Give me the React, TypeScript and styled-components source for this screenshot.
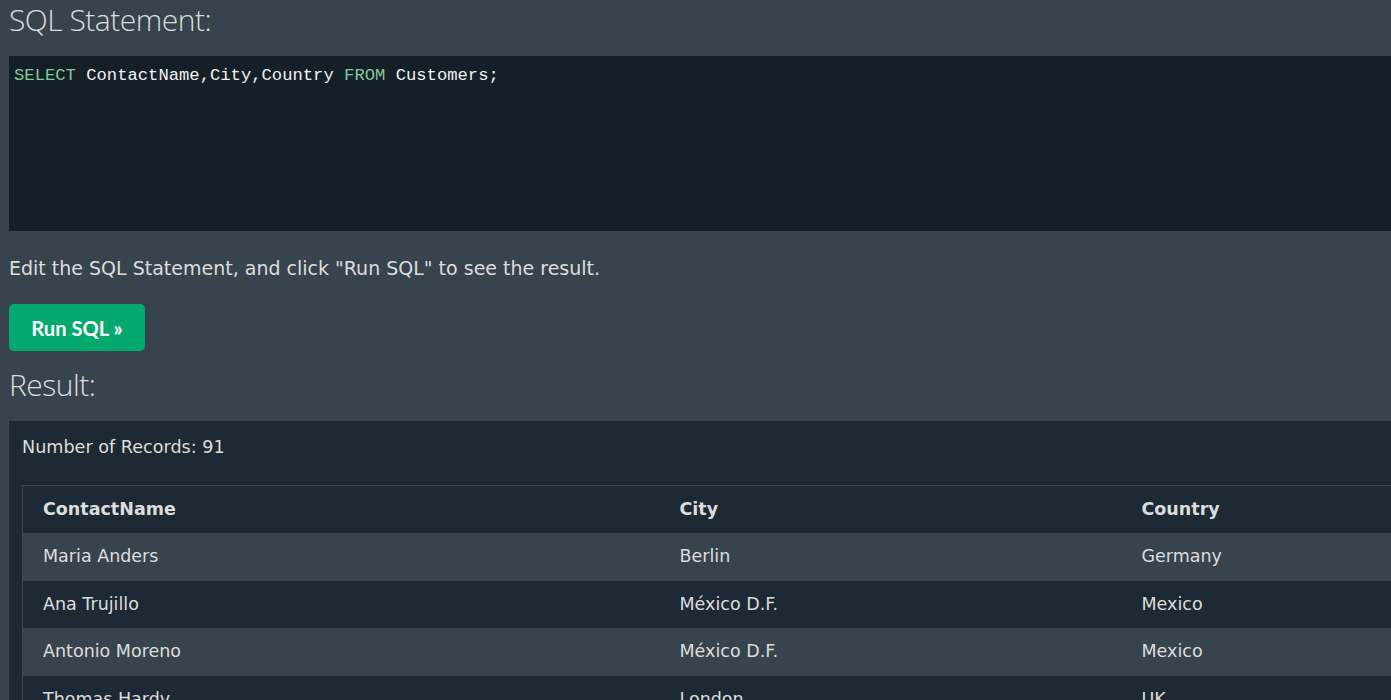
import React from "react";
import styled, { createGlobalStyle } from "styled-components";

const GlobalStyle = createGlobalStyle`
  html, body {
    margin: 0;
    padding: 0;
    overflow: hidden;
    background: #38444d;
  }
  body {
    font-family: "DejaVu Sans", Verdana, sans-serif;
    color: #dddddd;
  }
`;

const Page = styled.div`
  width: 1440px;
  padding-left: 9px;
  box-sizing: border-box;
  background: #38444d;
  min-height: 700px;
`;

const Heading = styled.h3<{ $top: number }>`
  margin: ${(p) => p.$top}px 0 0 0;
  font-family: "Open Sans", "Segoe UI", sans-serif;
  font-weight: 300;
  font-size: 30px;
  letter-spacing: -0.5px;
  line-height: 36px;
  color: #dddddd;
`;

const CodeBox = styled.div`
  margin-top: 18px;
  height: 175px;
  box-sizing: border-box;
  padding: 10px 5px;
  background: #151f28;
  font-family: "Liberation Mono", "DejaVu Sans Mono", monospace;
  font-size: 17.2px;
  line-height: 1.2;
  color: #f2f2f2;
  white-space: pre;
`;

const Keyword = styled.span`
  color: #85c69a;
`;

const Instruction = styled.p`
  margin: 23px 0 0 0;
  font-size: 19px;
  line-height: 28px;
  color: #dddddd;
`;

const RunButton = styled.button`
  margin-top: 22px;
  width: 136px;
  height: 47px;
  display: flex;
  align-items: center;
  justify-content: center;
  border: none;
  border-radius: 5px;
  background: #04aa6d;
  color: #ffffff;
  font-family: Lato, "Open Sans", sans-serif;
  font-weight: 700;
  font-size: 20.2px;
  padding: 0;
  cursor: pointer;
`;

const ResultBox = styled.div`
  margin-top: 18px;
  background: #1d2a35;
  padding: 14px 0 0 13px;
  min-height: 400px;
  box-sizing: border-box;
`;

const RecordCount = styled.div`
  font-size: 17.6px;
  line-height: 25px;
  color: #dddddd;
`;

const Table = styled.table`
  margin-top: 25px;
  border-collapse: collapse;
  border-top: 1px solid #3a4650;
  border-left: 1px solid #3a4650;
  width: 1420px;
  font-size: 17.5px;
  color: #dddddd;
`;

const Row = styled.tr<{ $alt?: boolean }>`
  background: ${(p) => (p.$alt ? "#38444d" : "#1d2a35")};
`;

const HeadCell = styled.th<{ $w?: number }>`
  text-align: left;
  font-weight: 700;
  padding: 12px 20px 12px 20px;
  line-height: 23px;
  width: ${(p) => (p.$w ? `${p.$w}px` : "auto")};
  box-sizing: border-box;
`;

const Cell = styled.td`
  padding: 12px 20px;
  line-height: 23.5px;
`;

const rows = [
  ["Maria Anders", "Berlin", "Germany"],
  ["Ana Trujillo", "México D.F.", "Mexico"],
  ["Antonio Moreno", "México D.F.", "Mexico"],
  ["Thomas Hardy", "London", "UK"],
  ["Christina Berglund", "Luleå", "Sweden"],
];

export default function App() {
  return (
    <>
      <GlobalStyle />
      <Page>
        <Heading $top={2}>SQL Statement:</Heading>
        <CodeBox>
          <Keyword>SELECT</Keyword> ContactName,City,Country <Keyword>FROM</Keyword> Customers;
        </CodeBox>
        <Instruction>
          Edit the SQL Statement, and click "Run SQL" to see the result.
        </Instruction>
        <RunButton>Run SQL »</RunButton>
        <Heading $top={16}>Result:</Heading>
        <ResultBox>
          <RecordCount>Number of Records: 91</RecordCount>
          <Table>
            <thead>
              <Row>
                <HeadCell $w={637}>ContactName</HeadCell>
                <HeadCell $w={462}>City</HeadCell>
                <HeadCell>Country</HeadCell>
              </Row>
            </thead>
            <tbody>
              {rows.map((r, i) => (
                <Row key={i} $alt={i % 2 === 0}>
                  <Cell>{r[0]}</Cell>
                  <Cell>{r[1]}</Cell>
                  <Cell>{r[2]}</Cell>
                </Row>
              ))}
            </tbody>
          </Table>
        </ResultBox>
      </Page>
    </>
  );
}
